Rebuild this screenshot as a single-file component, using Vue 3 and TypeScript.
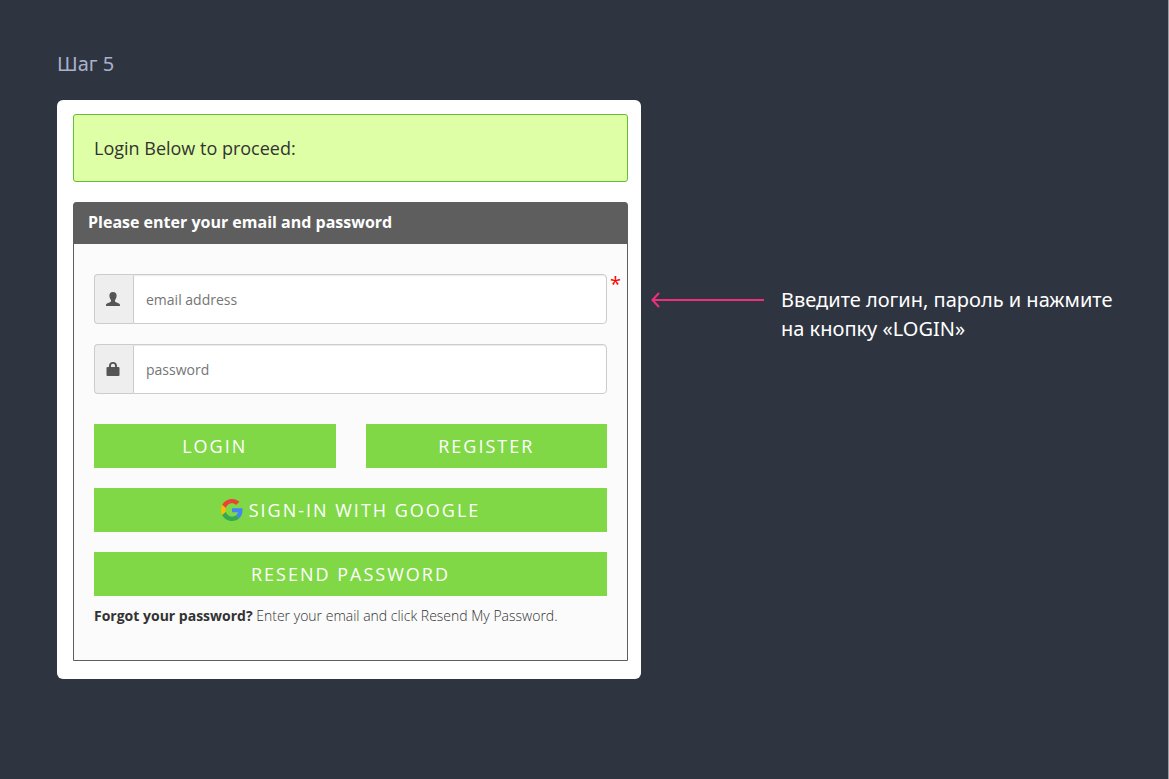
<script setup lang="ts">
import { ref } from 'vue'

const email = ref('')
const password = ref('')
</script>

<template>
  <main class="page">
    <h1 class="step">Шаг 5</h1>
    <div class="row">
      <section class="card">
        <p class="notice">Login Below to proceed:</p>
        <form class="panel" @submit.prevent>
          <h2 class="panel-title">Please enter your email and password</h2>
          <div class="panel-body">
            <div class="field">
              <label class="addon" for="email" aria-label="email address">
                <svg width="14" height="14" viewBox="0 0 14 14" aria-hidden="true">
                  <path d="M7 0C4.600 0 3.300 1.500 3.400 3.600C3.500 5.800 4.200 7.200 5 8V9.500C4.500 10.500 0 11 0 13V14H14V13C14 11 9.500 10.500 9 9.500V8C9.800 7.200 10.500 5.800 10.600 3.600C10.700 1.500 9.400 0 7 0Z" fill="#555" />
                </svg>
              </label>
              <input id="email" v-model="email" class="input" type="email" placeholder="email address" />
              <span class="required">*</span>
            </div>
            <div class="field">
              <label class="addon" for="password" aria-label="password">
                <svg width="14" height="14" viewBox="0 0 14 14" aria-hidden="true">
                  <path d="M1 5H3V4C3 1.500 4.500 0 7 0S11 1.500 11 4V5H12.500Q13.500 5 13.500 6V13Q13.500 14 12.500 14H1.500Q0.500 14 0.500 13V6Q0.500 5 1.500 5ZM5 5H9V4C9 2.500 8.300 1.800 7 1.800S5 2.500 5 4Z" fill="#555" fill-rule="evenodd" />
                </svg>
              </label>
              <input id="password" v-model="password" class="input" type="password" placeholder="password" />
            </div>
            <div class="pair">
              <button class="btn" type="submit">LOGIN</button>
              <button class="btn" type="button">REGISTER</button>
            </div>
            <button class="btn" type="button">
              <svg class="google" width="22" height="22" viewBox="0 0 48 48" aria-hidden="true">
                <path fill="#EA4335" d="M24 9.500c3.540 0 6.710 1.220 9.210 3.600l6.850-6.850C35.900 2.380 30.470 0 24 0 14.620 0 6.510 5.380 2.560 13.220l7.980 6.190C12.430 13.720 17.740 9.500 24 9.500z" />
                <path fill="#4285F4" d="M46.980 24.550c0-1.570-.15-3.090-.38-4.550H24v9.020h12.940c-.58 2.960-2.260 5.480-4.780 7.180l7.730 6c4.510-4.180 7.090-10.360 7.090-17.650z" />
                <path fill="#FBBC05" d="M10.530 28.590c-.48-1.450-.76-2.990-.76-4.590s.27-3.140.76-4.590l-7.980-6.190C.92 16.460 0 20.120 0 24c0 3.880.92 7.540 2.560 10.780l7.970-6.190z" />
                <path fill="#34A853" d="M24 48c6.480 0 11.930-2.130 15.890-5.810l-7.730-6c-2.150 1.450-4.920 2.300-8.160 2.300-6.260 0-11.570-4.220-13.470-9.910l-7.980 6.190C6.510 42.620 14.620 48 24 48z" />
              </svg>
              SIGN-IN WITH GOOGLE
            </button>
            <button class="btn" type="button">RESEND PASSWORD</button>
            <p class="hint"><strong>Forgot your password?</strong> Enter your email and click Resend My Password.</p>
          </div>
        </form>
      </section>
      <aside class="callout">
        <svg class="arrow" width="113" height="16" viewBox="0 0 113 16" aria-hidden="true">
          <path d="M113 8H1.500M8 1L1.500 8L8 15" fill="none" stroke="#ee2f7f" stroke-width="2" />
        </svg>
        <p class="callout-text">Введите логин, пароль и нажмите на кнопку «LOGIN»</p>
      </aside>
    </div>
  </main>
</template>

<style>
body {
  margin: 0;
  background: #2f3540;
}
</style>

<style scoped>
.page {
  box-sizing: border-box;
  min-height: 100vh;
  padding: 50px 0 100px 57px;
  background: #2f3540;
  border-right: 1px solid #989ba0;
  font-family: "Open Sans", "Noto Sans", sans-serif;
}
h1, h2, p {
  margin: 0;
}
.step {
  margin-bottom: 22px;
  font: 400 20px/28px "Noto Sans", sans-serif;
  color: #a9b2cc;
}
.row {
  display: flex;
  align-items: flex-start;
}
.card {
  box-sizing: border-box;
  flex: none;
  width: 50vw;
  max-width: 584px;
  padding: 14px 13px 18px 16px;
  background: #fff;
  border-radius: 6px;
}
.notice {
  margin-bottom: 20px;
  padding: 20px;
  border: 1px solid #64be30;
  border-radius: 3px;
  background: #deffa5;
  color: #333;
  font-size: 18px;
  line-height: 26px;
}
.panel {
  border: 1px solid #5e5e5e;
  border-radius: 3px 3px 0 0;
  background: #fbfbfb;
}
.panel-title {
  padding: 0 14px 3px;
  background: #5e5e5e;
  color: #fff;
  font-size: 16px;
  font-weight: 700;
  line-height: 38px;
}
.panel-body {
  display: flex;
  flex-direction: column;
  gap: 20px;
  padding: 30px 20px 34px;
}
.field {
  position: relative;
  display: flex;
}
.addon {
  display: flex;
  align-items: center;
  justify-content: center;
  width: 36px;
  padding-right: 2px;
  border: 1px solid #ccc;
  border-right: 0;
  border-radius: 4px 0 0 4px;
  background: #eee;
}
.input {
  box-sizing: border-box;
  flex: 1;
  min-width: 0;
  height: 50px;
  padding: 0 12px;
  border: 1px solid #ccc;
  border-radius: 0 4px 4px 0;
  background: #fff;
  box-shadow: inset 0 1px 1px rgba(0, 0, 0, 0.08);
  color: #333;
  font-family: inherit;
  font-size: 14px;
}
.input::placeholder {
  color: #757575;
  opacity: 1;
}
.required {
  position: absolute;
  top: -2px;
  left: 100%;
  margin-left: 3px;
  color: #f00;
  font-size: 20px;
  line-height: 24px;
}
.pair {
  display: grid;
  grid-template-columns: 1fr 1fr;
  gap: 30px;
  margin-top: 10px;
}
.btn {
  display: flex;
  align-items: center;
  justify-content: center;
  gap: 6px;
  height: 44px;
  padding: 0;
  border: 0;
  background: #81d846;
  color: #fff;
  font-family: inherit;
  font-size: 18px;
  letter-spacing: 2px;
  cursor: pointer;
}
.hint {
  margin-top: -10px;
  color: #333;
  font-size: 14px;
  font-weight: 300;
  line-height: 20px;
}
.hint strong {
  font-weight: 700;
}
.callout {
  display: flex;
  flex: 1;
  align-items: flex-start;
  gap: 17px;
  min-width: 0;
  margin-top: 185px;
  padding: 0 40px 0 10px;
}
.arrow {
  flex: none;
  margin-top: 7px;
}
.callout-text {
  color: #fff;
  font: 400 20px/29px "Noto Sans", sans-serif;
}
</style>
